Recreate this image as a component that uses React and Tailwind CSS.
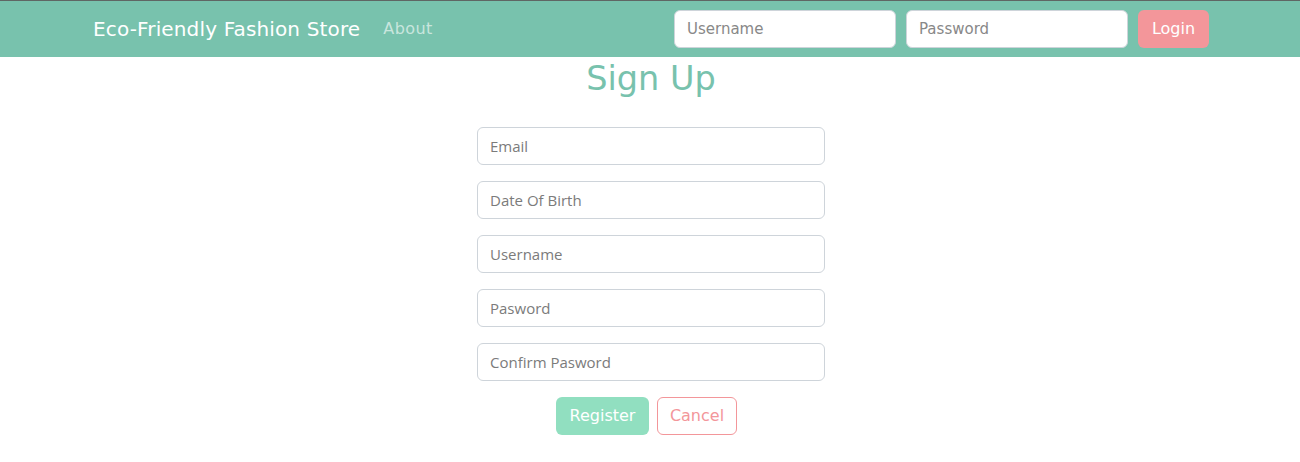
const FIELDS = ['Email', 'Date Of Birth', 'Username', 'Pasword', 'Confirm Pasword'];

const navInput =
  "w-[222px] shrink-0 h-[38px] rounded-[6px] bg-white border border-[#ced4da] px-[12px] text-[15px] font-['DejaVu_Sans'] placeholder:text-[#888] outline-none";

function Navbar() {
  return (
    <nav className="bg-[#78c2ad] border-t border-[#5f6664] h-[57px]">
      <div className="ml-[93px] mr-[91px] h-full flex items-center font-['DejaVu_Sans']">
        <a className="text-white text-[20px] tracking-[0.15px]">Eco-Friendly Fashion Store</a>
        <a className="ml-[23px] text-[16px] text-white/60 tracking-[0.4px]">About</a>
        <div className="ml-auto flex items-center gap-[10px]">
          <input placeholder="Username" className={navInput} />
          <input placeholder="Password" className={navInput} />
          <button className="w-[71px] shrink-0 h-[38px] rounded-[6px] bg-[#f3969a] text-white text-[16px]">Login</button>
        </div>
      </div>
    </nav>
  );
}

export default function App() {
  return (
    <div className="bg-white min-h-[462px]">
      <Navbar />
      <main className="flex flex-col items-center">
        <h1 className="text-[#78c2ad] text-[33.5px] leading-[40px] mt-[2px] ml-[2px] font-['DejaVu_Sans']">Sign Up</h1>
        <form className="mt-[28px] ml-[2px] w-[348px] flex flex-col gap-[16px]">
          {FIELDS.map((f) => (
            <input
              key={f}
              placeholder={f}
              className="h-[38px] rounded-[6px] border border-[#ced4da] px-[12px] text-[15px] font-['Open_Sans'] placeholder:text-[#7b7b7b] outline-none"
            />
          ))}
          <div className="flex justify-center gap-[8px] pr-[9px] font-['DejaVu_Sans'] text-[16px]">
            <button type="button" className="w-[93px] h-[38px] rounded-[6px] bg-[#91dfc0] text-white">
              Register
            </button>
            <button type="button" className="w-[80px] h-[38px] rounded-[6px] border border-[#f3969a] text-[#f3969a]">
              Cancel
            </button>
          </div>
        </form>
      </main>
    </div>
  );
}
